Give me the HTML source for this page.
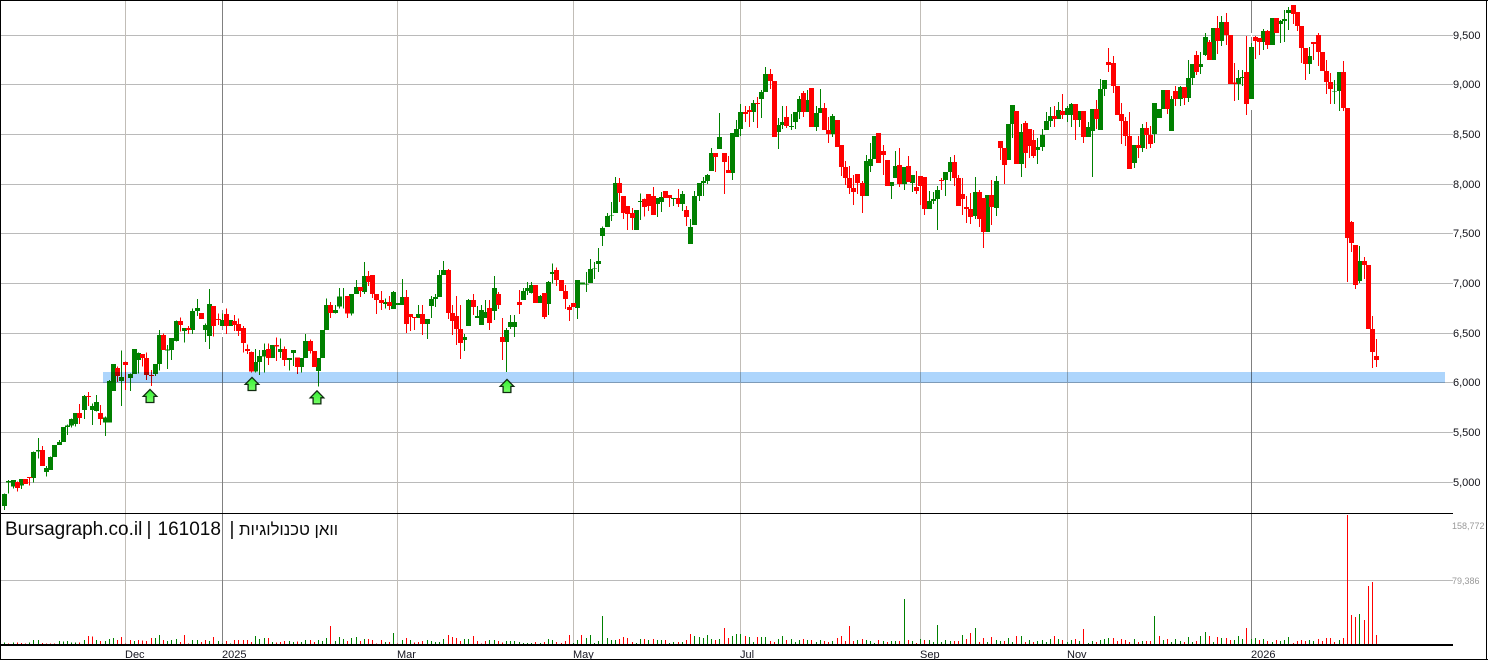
<!DOCTYPE html>
<html><head><meta charset="utf-8"><title>Bursagraph</title>
<style>
html,body{margin:0;padding:0;background:#fff;width:1488px;height:660px;overflow:hidden}
svg{display:block;position:absolute;left:0;top:0}
text{font-family:"Liberation Sans",Arial,sans-serif}
.g{stroke:#008000;fill:none}
.r{stroke:#ff0000;fill:none}
.w{stroke-width:3}
.b{stroke-width:15}
.p{font-size:11px;fill:#111118}
.v{font-size:9px;fill:#999}
.d{font-size:11px;fill:#15151f}
</style></head><body>
<svg width="1488" height="660" viewBox="0 0 1488 660" xmlns="http://www.w3.org/2000/svg" shape-rendering="crispEdges">
<defs><linearGradient id="ag" x1="0" y1="0" x2="0" y2="1"><stop offset="0" stop-color="#33ee33"/><stop offset="1" stop-color="#77ff66"/></linearGradient></defs>
<!-- horizontal grid -->
<g fill="#bababa">
<rect x="0" y="35" width="1453" height="1"/><rect x="0" y="84" width="1453" height="1"/><rect x="0" y="134" width="1453" height="1"/><rect x="0" y="184" width="1453" height="1"/><rect x="0" y="233" width="1453" height="1"/><rect x="0" y="283" width="1453" height="1"/><rect x="0" y="333" width="1453" height="1"/><rect x="0" y="382" width="1453" height="1"/><rect x="0" y="432" width="1453" height="1"/><rect x="0" y="482" width="1453" height="1"/><rect x="0" y="580" width="1453" height="1"/>
</g>
<!-- vertical grid -->
<g fill="#c1bdb7">
<rect x="125" y="0" width="1" height="645"/><rect x="397" y="0" width="1" height="645"/><rect x="573" y="0" width="1" height="645"/><rect x="740" y="0" width="1" height="645"/><rect x="920" y="0" width="1" height="645"/><rect x="1067" y="0" width="1" height="645"/>
</g>
<g fill="#808080"><rect x="222" y="0" width="1" height="645"/><rect x="1251" y="0" width="1" height="645"/></g>
<g fill="#fff"><rect x="222" y="303" width="1" height="7"/><rect x="222" y="330" width="1" height="7"/><rect x="1251" y="33" width="1" height="4"/><rect x="1251" y="99" width="1" height="11"/></g>

<!-- candles zone 1 -->
<g transform="matrix(.33333 0 0 .33333 0 280)">
<path class="g w" d="M13 640V690M25 600V640M40 600V625M64 597V627M100 515V608M115 474V535M139 558V590M151 530V570M163 495V531M178 480V495M190 441V486M202 433V465M214 415V443M226 400V440M253 345V417M277 370V435M289 345V395M316 410V468M328 300V428M340 252V333M364 212V378M391 280V333M403 207V282M415 218V280M466 252V288M478 150V272M502 195V267M514 175V240M529 122V185M553 144V188M577 85V162M592 57V108M616 130V186M628 27V207M667 100V138M691 120V138M766 207V278M778 210V285M793 190V278M817 195V234M841 175V234M868 234V272M880 210V258M904 234V278M916 162V234M955 234V320M967 150V234M979 55V150M1006 75V100"/>
<path class="r w" d="M52 605V635M76 597V612M88 592V617M127 498V558M238 372V432M265 336V378M301 375V435M352 260V306M376 245V330M427 222V260M439 218V300M454 270V318M490 160V210M541 113V155M565 138V162M604 99V117M640 78V170M655 100V135M679 85V162M703 105V153M715 115V168M730 138V218M742 193V222M754 215V278M805 190V255M829 172V243M853 200V258M892 232V282M931 178V220M943 213V260M991 66V114"/>
<path class="g b" d="M13 642V678M25 603V608M40 600V620M64 597V617M100 516V594M115 510V515M139 564V576M151 531V570M163 495V531M178 486V495M190 441V486M202 437V441M214 417V436M226 399V432M253 348V390M277 378V390M289 366V393M316 412V428M328 303V428M340 252V333M364 291V303M391 282V294M403 207V282M415 219V240M466 252V282M478 165V252M502 209V212M514 174V210M529 123V183M553 144V153M577 93V150M592 84V93M616 135V150M628 72V168M667 120V138M691 120V138M766 246V275M778 228V246M793 210V230M817 195V234M841 207V216M868 234V240M880 210V219M904 234V261M916 183V234M955 234V273M967 150V234M979 75V150M1006 90V99"/>
<path class="r b" d="M52 606V624M76 597V612M88 591V594M127 510V558M238 399V414M265 348V351M301 399V417M352 264V288M376 246V255M427 222V234M439 234V285M454 285V288M490 165V210M541 123V135M565 144V150M604 99V117M640 78V138M655 117V120M679 102V138M703 123V135M715 132V153M730 144V189M742 207V213M754 216V275M805 207V234M829 195V200M853 207V240M892 232V261M931 183V213M943 213V261M991 75V99"/>
</g>

<!-- candles zone 2 -->
<g transform="matrix(.33333 0 0 .33333 340 170)">
<path class="g w" d="M-2 354V415M10 354V415M34 372V437M49 330V372M73 276V372M136 385V415M160 363V417M175 399V405M187 327V405M235 405V444M262 447V507M274 378V444M286 372V411M298 300V381M310 273V315M373 492V543M385 387V468M412 408V444M424 405V465M436 390V444M463 318V450M499 474V606M511 435V477M523 435V501M550 354V390M562 336V375M574 336V370M601 375V399M625 333V435M637 280V340M712 330V447M727 338V344M739 306V366M751 267V339M763 276V327M775 234V306M787 170V228M802 129V171M814 96V153M826 21V129M889 120V180M901 70V150M952 84V141M964 66V126M1000 84V108"/>
<path class="r w" d="M22 378V444M61 351V381M85 303V348M97 315V384M109 372V432M124 363V420M148 378V420M199 360V489M211 432V483M223 441V480M247 405V495M325 297V447M337 405V495M349 378V525M361 405V567M400 372V435M448 390V480M475 366V417M487 444V570M538 360V432M586 345V399M613 369V447M649 292V348M664 330V363M676 345V417M688 405V453M700 399V411M838 24V96M850 78V147M862 108V180M877 114V180M913 85V140M925 72V123M940 51V135M976 63V84M988 75V111M1015 57V111"/>
<path class="g b" d="M-2 380V410M34 372V431M49 351V372M73 318V366M136 396V402M160 366V417M175 399V405M187 381V405M235 432V444M262 447V462M274 387V408M286 381V387M298 315V381M310 300V315M373 501V510M385 390V468M412 438V444M424 420V465M436 426V444M463 354V423M499 480V516M511 456V471M523 456V471M550 363V390M562 354V363M574 345V369M601 378V399M625 336V402M637 306V312M712 330V414M727 338V344M739 342V344M751 297V339M763 295V297M775 273V282M787 174V198M802 138V171M814 135V137M826 39V129M889 120V180M901 93V96M952 84V102M964 81V96M1000 84V87"/>
<path class="r b" d="M22 378V431M61 351V363M85 318V336M97 315V372M109 372V390M124 390V399M148 396V408M199 381V462M211 432V441M223 441V444M247 432V462M325 300V429M337 429V453M349 438V477M361 477V519M400 390V411M448 414V459M475 372V405M487 501V516M538 396V405M586 345V399M613 369V441M649 300V330M664 330V363M676 363V387M688 411V420M700 399V411M838 39V69M850 78V129M862 108V132M877 129V144M913 87V111M925 72V108M940 78V135M976 63V84M988 75V84M1015 84V102"/>
</g>

<!-- candles zone 3 -->
<g transform="matrix(.33333 0 0 .33333 680 60)">
<path class="g w" d="M7 393V453M31 477V552M43 393V495M58 369V423M70 351V408M82 342V372M94 264V333M118 159V267M157 219V360M169 180V231M181 132V228M220 120V186M244 90V174M256 21V96M295 174V267M307 138V207M334 162V210M346 156V207M358 108V177M382 90V156M409 138V213M421 87V159M457 162V231M559 285V408M571 249V336M583 228V297M634 366V417M646 273V354M673 321V390M697 345V396M748 393V447M760 396V432M772 378V510M796 336V408M811 291V363M886 351V477M922 405V516M949 348V468M985 192V300M997 135V234"/>
<path class="r w" d="M19 438V498M106 279V336M133 279V402M145 288V339M196 138V186M208 138V201M232 111V204M271 27V87M283 63V231M319 138V204M370 93V171M394 84V201M433 129V210M445 171V249M472 180V261M484 255V348M496 303V375M508 318V402M520 345V435M532 342V402M547 363V459M595 219V309M610 255V345M622 300V378M658 264V381M685 288V366M709 333V402M721 348V435M733 351V465M784 354V390M823 285V378M835 345V438M847 354V465M859 408V489M871 399V492M898 390V501M910 414V564M934 360V495M961 243V300M973 264V372M1009 153V312"/>
<path class="g b" d="M7 402V432M31 501V552M43 408V495M58 369V408M70 363V369M82 345V363M94 279V333M118 231V267M157 219V339M169 207V231M181 156V207M220 129V156M244 96V117M256 42V96M295 195V216M307 186V195M334 198V201M346 156V186M358 117V156M382 120V156M409 159V201M421 144V159M457 168V222M559 303V408M571 297V318M583 228V297M634 366V378M646 318V354M673 321V372M697 345V369M748 423V447M760 417V423M772 390V417M796 336V360M811 306V336M886 396V468M922 405V516M949 363V444M985 192V300M997 135V192"/>
<path class="r b" d="M19 450V471M106 279V291M133 279V306M145 330V339M196 156V162M208 150V156M232 129V132M271 42V63M283 63V231M319 171V198M370 99V156M394 84V201M433 144V210M445 210V222M472 180V261M484 255V321M496 321V354M508 354V384M520 384V396M532 342V369M547 369V408M595 219V309M610 273V285M622 300V378M658 315V372M685 318V366M709 381V393M721 348V378M733 351V447M784 360V363M823 306V354M835 354V438M847 402V417M859 441V447M871 447V471M898 396V477M910 414V516M934 405V441M961 243V264M973 264V315M1009 153V312"/>
</g>

<!-- candles zone 4 -->
<g transform="matrix(.33333 0 0 .33333 1020 0)">
<path class="g w" d="M4 372V531M52 414V492M67 387V453M79 336V390M91 321V381M115 306V357M142 318V366M154 309V381M178 333V381M205 366V411M217 333V531M241 237V390M253 240V288M343 435V504M367 372V456M403 309V429M418 327V354M430 270V327M454 288V393M481 258V318M505 180V306M517 192V255M541 156V222M556 99V168M580 84V180M604 48V138M655 210V300M667 210V258M694 129V297M730 87V150M757 54V135M781 60V129M793 30V126M805 21V90M868 141V222M943 240V312M958 216V333"/>
<path class="r w" d="M16 363V504M28 387V474M40 390V474M103 318V381M127 282V357M166 312V420M190 333V429M229 300V387M265 144V216M280 168V279M292 258V345M304 309V432M316 351V438M328 336V507M355 408V474M379 366V447M391 378V444M442 270V342M466 258V318M493 261V315M529 153V225M568 120V180M592 48V162M619 39V135M631 105V252M643 189V303M679 108V345M706 108V177M718 114V165M742 90V147M769 54V99M820 15V72M832 36V93M844 78V189M856 144V240M880 126V180M895 99V198M907 156V213M919 180V282M931 219V312M970 183V333M982 324V714"/>
<path class="g b" d="M4 396V492M52 441V450M67 405V441M79 363V390M91 348V363M115 330V357M142 324V345M154 312V345M178 333V360M205 381V411M217 327V393M241 267V390M253 240V267M343 435V489M367 384V444M403 309V402M418 327V354M430 270V327M454 297V393M481 261V297M505 234V294M517 192V234M541 192V201M556 111V165M580 84V180M604 66V123M655 234V252M667 231V234M694 141V297M730 93V126M757 54V135M781 63V72M793 57V63M805 30V39M868 168V192M943 273V275M958 216V273"/>
<path class="r b" d="M16 369V459M28 387V438M40 420V468M103 348V357M127 333V345M166 312V360M190 333V411M229 327V357M265 186V195M280 189V258M292 258V345M304 342V363M316 363V408M328 408V507M355 435V444M379 384V405M391 405V432M442 270V327M466 273V297M493 261V294M529 165V216M568 126V180M592 84V123M619 66V105M631 105V252M643 248V252M679 216V312M706 111V123M718 114V126M742 93V135M769 54V99M820 15V42M832 36V78M844 78V144M856 144V192M880 126V132M895 105V156M907 156V213M919 213V246M931 246V267M970 216V324M982 324V714"/>
</g>

<!-- candles zone 5 -->
<g transform="matrix(.33333 0 0 .33333 1300 200)">
<path class="g w" d="M178 138V249"/>
<path class="g b" d="M178 183V243"/>
<path class="r w" d="M142 0V246M154 63V156M166 135V267M193 171V237M205 195V387M217 348V504M229 417V501"/>
<path class="r b" d="M142 0V114M154 66V129M166 135V255M193 183V195M205 195V387M217 387V456M229 468V480"/>
</g>

<!-- support band -->
<rect x="103" y="372" width="1342" height="11" fill="#add5fc" style="mix-blend-mode:multiply"/>

<!-- arrows -->
<g shape-rendering="geometricPrecision" fill="url(#ag)" stroke="#102c10" stroke-width="1.3" stroke-linejoin="miter">
<polygon points="150,389.4 156.8,396.4 153.9,396.4 153.9,402.5 146.1,402.5 146.1,396.4 143.2,396.4"/>
<polygon points="252,377.4 258.8,384.4 255.9,384.4 255.9,390.5 248.1,390.5 248.1,384.4 245.2,384.4"/>
<polygon points="317,390.8 323.8,397.8 320.9,397.8 320.9,403.9 313.1,403.9 313.1,397.8 310.2,397.8"/>
<polygon points="507,379.4 513.8,386.4 510.9,386.4 510.9,392.5 503.1,392.5 503.1,386.4 500.2,386.4"/>
</g>

<!-- volumes -->
<g transform="matrix(.33333 0 0 .33333 0 510)">
<path class="g w" d="M13 398V405M40 397V405M88 397V405M100 390V405M115 390V405M178 393V405M190 394V405M202 393V405M214 398V405M226 397V405M253 390V405M289 390V405M316 393V405M328 387V405M340 384V405M403 393V405M466 384V405M478 375V405M502 393V405M514 390V405M529 387V405M577 390V405M592 390V405M628 393V405M655 393V405M667 400V405M691 400V405M766 378V405M778 387V405M793 384V405M817 396V405M868 393V405M880 396V405M904 396V405M916 390V405M955 390V405M967 393V405M979 384V405M1006 393V405M1018 381V405M1030 387V405M1054 384V405M1069 381V405M1093 387V405M1156 396V405M1180 369V405M1207 390V405M1231 390V405M1282 390V405M1294 393V405M1306 396V405M1318 396V405M1330 387V405M1393 387V405M1405 387V405M1468 390V405M1483 390V405"/>
<path class="r w" d="M25 400V405M52 397V405M64 399V405M76 400V405M127 399V405M139 400V405M151 400V405M163 400V405M238 397V405M265 378V405M277 380V405M301 393V405M352 390V405M364 381V405M376 400V405M391 390V405M415 390V405M427 392V405M439 393V405M454 384V405M490 390V405M541 396V405M553 375V405M565 400V405M604 396V405M616 390V405M640 381V405M679 393V405M703 390V405M715 390V405M730 390V405M742 390V405M754 396V405M805 384V405M829 397V405M841 396V405M853 393V405M892 394V405M931 390V405M943 396V405M991 348V405M1042 393V405M1081 393V405M1105 387V405M1117 390V405M1129 400V405M1144 390V405M1168 396V405M1192 400V405M1219 384V405M1243 397V405M1255 396V405M1267 393V405M1345 375V405M1357 381V405M1369 384V405M1381 393V405M1420 378V405M1432 393V405M1444 400V405M1456 393V405M1495 393V405"/>
</g>
<g transform="matrix(.33333 0 0 .33333 500 570)">
<path class="g w" d="M19 213V225M31 213V225M43 213V225M58 216V225M70 219V225M82 219V225M94 219V225M121 219V225M145 207V225M157 210V225M220 219V225M232 210V225M259 204V225M271 195V225M283 219V225M295 213V225M307 138V225M322 204V225M334 210V225M346 210V225M409 219V225M421 207V225M445 210V225M472 210V225M484 210V225M508 219V225M520 216V225M547 216V225M583 198V225M598 201V225M610 204V225M622 195V225M634 207V225M658 207V225M697 198V225M709 192V225M721 192V225M748 201V225M760 216V225M784 201V225M796 201V225M835 207V225M847 198V225M874 207V225M886 216V225M898 210V225M922 210V225M949 216V225M961 210V225M997 213V225M1072 210V225M1099 210V225M1111 213V225M1123 219V225M1150 213V225M1174 213V225M1186 213V225M1213 87V225M1237 213V225M1261 207V225M1288 210V225M1300 216V225M1312 165V225M1324 216V225M1336 210V225M1351 213V225M1387 195V225M1426 174V225M1462 216V225M1489 210V225"/>
<path class="r w" d="M7 218V225M106 216V225M133 216V225M169 216V225M184 219V225M196 213V225M208 195V225M244 195V225M358 207V225M370 201V225M382 204V225M397 216V225M433 207V225M460 207V225M496 210V225M535 216V225M559 210V225M571 192V225M646 210V225M673 174V225M685 204V225M736 198V225M772 201V225M811 213V225M823 216V225M859 210V225M910 207V225M934 210V225M973 213V225M985 216V225M1012 204V225M1024 198V225M1036 213V225M1048 168V225M1060 213V225M1087 207V225M1135 210V225M1162 216V225M1198 213V225M1225 210V225M1249 219V225M1273 210V225M1363 213V225M1375 213V225M1399 207V225M1411 189V225M1438 216V225M1450 204V225M1474 201V225"/>
</g>
<g transform="matrix(.33333 0 0 .33333 1000 510)">
<path class="g w" d="M1 393V405M25 384V405M37 396V405M64 378V405M88 390V405M112 393V405M127 390V405M139 396V405M151 387V405M175 387V405M202 396V405M214 390V405M238 393V405M265 399V405M277 393V405M301 390V405M313 387V405M325 384V405M403 387V405M427 393V405M463 318V405M490 390V405M514 396V405M526 387V405M541 393V405M565 381V405M577 396V405M601 378V405M616 366V405M640 396V405M664 384V405M703 390V405M715 378V405M727 387V405M754 387V405M766 384V405M790 387V405M817 396V405M841 393V405M853 390V405M865 381V405M928 390V405M940 393V405M1018 390V405M1078 312V405"/>
<path class="r w" d="M13 393V405M49 378V405M76 396V405M100 396V405M163 378V405M187 390V405M226 387V405M250 357V405M289 396V405M340 384V405M352 393V405M364 387V405M376 390V405M388 396V405M415 396V405M439 393V405M451 393V405M478 378V405M502 387V405M553 396V405M589 393V405M628 378V405M652 381V405M679 384V405M691 390V405M739 354V405M778 390V405M802 393V405M829 390V405M880 399V405M892 393V405M904 390V405M916 393V405M955 387V405M967 393V405M979 384V405M991 384V405M1003 396V405M1030 384V405M1042 15V405M1054 315V405M1066 321V405M1093 330V405M1105 228V405M1117 216V405M1129 375V405"/>
</g>

<!-- frame -->
<g fill="#000">
<rect x="0" y="0" width="1488" height="1"/>
<rect x="0" y="0" width="1" height="660"/>
<rect x="1486" y="0" width="1" height="660"/>
<rect x="0" y="659" width="1488" height="1"/>
<rect x="0" y="513" width="1453" height="1"/>
<rect x="0" y="644" width="1453" height="2"/>
</g>

<!-- labels -->
<g shape-rendering="auto">
<text x="5" y="535" font-size="19" fill="#0a0a0a">Bursagraph.co.il</text>
<text x="146.5" y="535" font-size="19" fill="#0a0a0a">|</text>
<text x="157.5" y="535" font-size="19" fill="#0a0a0a">161018</text>
<text x="229.5" y="535" font-size="19" fill="#0a0a0a">|</text>
<text x="239" y="535" font-size="16.7" fill="#0a0a0a" direction="rtl" text-anchor="end">וואן טכנולוגיות</text>
<text class="p" x="1453" y="39">9,500</text>
<text class="p" x="1453" y="88">9,000</text>
<text class="p" x="1453" y="138">8,500</text>
<text class="p" x="1453" y="188">8,000</text>
<text class="p" x="1453" y="237">7,500</text>
<text class="p" x="1453" y="287">7,000</text>
<text class="p" x="1453" y="337">6,500</text>
<text class="p" x="1453" y="386">6,000</text>
<text class="p" x="1453" y="436">5,500</text>
<text class="p" x="1453" y="486">5,000</text>
<text class="v" x="1452" y="529">158,772</text>
<text class="v" x="1452" y="584">79,386</text>
<text class="d" x="125" y="658">Dec</text>
<text class="d" x="222" y="658">2025</text>
<text class="d" x="397" y="658">Mar</text>
<text class="d" x="573" y="658">May</text>
<text class="d" x="740" y="658">Jul</text>
<text class="d" x="920" y="658">Sep</text>
<text class="d" x="1067" y="658">Nov</text>
<text class="d" x="1251" y="658">2026</text>
</g>
</svg>
</body></html>
